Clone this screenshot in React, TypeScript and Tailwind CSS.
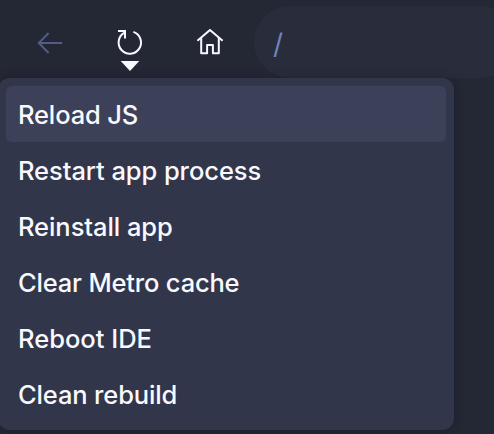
const items = [
  { label: "Reload JS", tracking: "tracking-[-0.15px]" },
  { label: "Restart app process", tracking: "tracking-[-0.07px]" },
  { label: "Reinstall app", tracking: "tracking-[-0.07px]" },
  { label: "Clear Metro cache", tracking: "tracking-[-0.18px]" },
  { label: "Reboot IDE", tracking: "tracking-[0px]" },
  { label: "Clean rebuild", tracking: "tracking-[-0.15px]" },
];

function BackIcon() {
  return (
    <svg className="size-10" viewBox="0 0 40 40" fill="none" stroke="currentColor" strokeWidth="2">
      <path d="M32.2 20H9M18.6 10L8.8 20L18.6 30" />
    </svg>
  );
}

function ReloadIcon() {
  return (
    <svg className="h-[60px] w-10" viewBox="0 0 40 60" fill="none" stroke="currentColor" strokeWidth="2">
      <path d="M8 8H15V15.4" />
      <path d="M23.4 8.9A11.2 11.2 0 1 1 14.6 9.6" />
      <path d="M10.7 38H29.3L20 48Z" fill="currentColor" stroke="none" />
    </svg>
  );
}

function HomeIcon() {
  return (
    <svg className="size-10" viewBox="0 0 40 40" fill="none" stroke="currentColor" strokeWidth="2" strokeLinejoin="round">
      <path d="M7.4 17.8L20 6.9L32.6 17.8" />
      <path d="M11.2 15V30.2H17.1V22H22.9V30.2H28.8V15" />
    </svg>
  );
}

export default function App() {
  return (
    <div className="relative h-[434px] w-[494px] overflow-hidden bg-[#242734] font-['Inter',sans-serif] text-[#f8f9ff]">
      <header className="flex h-[78px] pt-[6px]">
        <div className="flex w-[254px] shrink-0 items-start gap-10 pt-[17px] pl-[30px]">
          <button className="text-[#505d88]" aria-label="Back">
            <BackIcon />
          </button>
          <button aria-label="Reload">
            <ReloadIcon />
          </button>
          <button aria-label="Home">
            <HomeIcon />
          </button>
        </div>
        <div className="flex h-[72px] w-[262px] shrink-0 items-center rounded-full bg-[#292c3b] pt-[3px] pl-[19px] text-[28px] text-[#6f82bf]">
          <span>/</span>
        </div>
      </header>
      <ul className="absolute top-[78px] -left-[2px] h-[352px] w-[456px] rounded-xl bg-[#32364a] p-2 shadow-[0_0_12px_rgba(0,0,0,0.16)]">
        {items.map((item, i) => (
          <li
            key={item.label}
            className={`flex h-14 items-center rounded-md pt-[2px] pl-3 text-[25.5px] font-[450] whitespace-nowrap ${item.tracking} ${i === 0 ? "bg-[#3d4059]" : ""}`}
          >
            <span>{item.label}</span>
          </li>
        ))}
      </ul>
    </div>
  );
}
